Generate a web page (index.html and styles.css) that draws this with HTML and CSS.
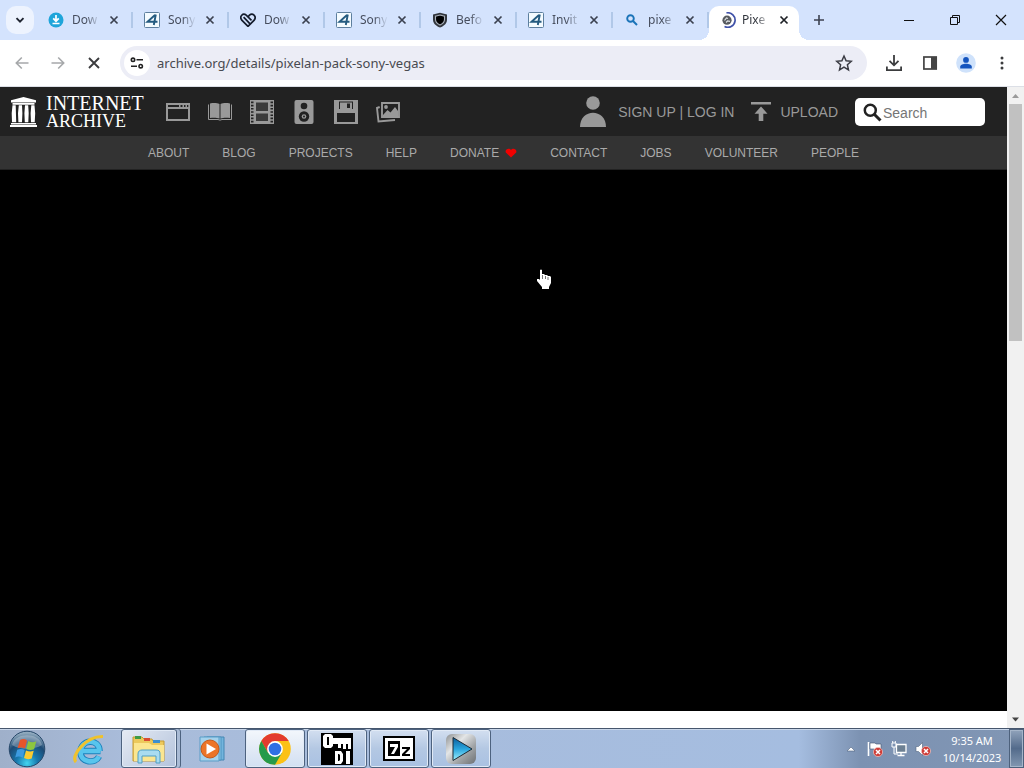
FILE: index.html
```html
<!DOCTYPE html>
<html lang="en">
<head>
<meta charset="utf-8">
<title>Pixelan Pack Sony Vegas</title>
<link rel="stylesheet" href="styles.css">
</head>
<body>
<svg class="defs" width="0" height="0" aria-hidden="true">
  <defs>
    <symbol id="x" viewBox="0 0 16 16"><path d="M4.500 4.500l7 7m0-7l-7 7" stroke="currentColor" stroke-width="1.700" fill="none"/></symbol>
    <symbol id="four" viewBox="0 0 16 16"><rect x=".5" y=".5" width="15" height="15" rx="1" fill="#f4fbff" stroke="#5d7f9e"/><path d="M11 3L3.500 9.700h10M11.800 2.500L9.800 13" fill="none" stroke="#245b80" stroke-width="1.900"/></symbol>
    <symbol id="err" viewBox="0 0 10 10"><circle cx="5" cy="5" r="4.600" fill="#cf3d38" stroke="#f0c4c0" stroke-width=".7"/><path d="M3 3l4 4m0-4L3 7" stroke="#fff" stroke-width="1.500"/></symbol>
  </defs>
</svg>

<header class="tabstrip">
  <button class="tab-search" aria-label="Search tabs"><svg width="16" height="16" viewBox="0 0 16 16"><path d="M4.500 6.200L8 9.700l3.500-3.500" fill="none" stroke="#1f2430" stroke-width="1.900"/></svg></button>
  <nav class="tabs" aria-label="Tabs">
    <div class="tab">
      <svg class="fav" viewBox="0 0 16 16"><circle cx="8" cy="8" r="7.500" fill="#1fa5da"/><path d="M8 3v5.500M5.200 6.300L8 9.200l2.800-2.900M4.500 11.500h7" fill="none" stroke="#fff" stroke-width="1.700"/></svg>
      <a class="title" href="#">Dow</a><button class="close" aria-label="Close tab"><svg><use href="#x"/></svg></button>
    </div>
    <div class="tab"><svg class="fav"><use href="#four"/></svg><a class="title" href="#">Sony</a><button class="close" aria-label="Close tab"><svg><use href="#x"/></svg></button></div>
    <div class="tab">
      <svg class="fav" viewBox="0 0 16 16"><path d="M8 14.300L1.800 8.200C-1 4.500 3 .3 6.200 3.200L11.500 8.300M8 14.300L14.200 8.200C17 4.300 12.500.2 9.500 3.200L8 4.800M3.600 5.200l6.200 6.400M1.800 8.200L8 14.300" fill="none" stroke="#141c2c" stroke-width="1.700"/></svg>
      <a class="title" href="#">Dow</a><button class="close" aria-label="Close tab"><svg><use href="#x"/></svg></button>
    </div>
    <div class="tab"><svg class="fav"><use href="#four"/></svg><a class="title" href="#">Sony</a><button class="close" aria-label="Close tab"><svg><use href="#x"/></svg></button></div>
    <div class="tab">
      <svg class="fav" viewBox="0 0 16 16"><path d="M8 .8L15 2.500v5c0 4-3 6.500-7 8-4-1.500-7-4-7-8v-5z" fill="#33373d"/><path d="M8 3l4.500 1.100v3.500c0 2.700-2 4.400-4.500 5.500-2.500-1.100-4.500-2.800-4.500-5.500V4.100z" fill="#000" stroke="#aab1ba" stroke-width="1.100"/></svg>
      <a class="title" href="#">Befo</a><button class="close" aria-label="Close tab"><svg><use href="#x"/></svg></button>
    </div>
    <div class="tab"><svg class="fav"><use href="#four"/></svg><a class="title" href="#">Invit</a><button class="close" aria-label="Close tab"><svg><use href="#x"/></svg></button></div>
    <div class="tab">
      <svg class="fav" viewBox="0 0 16 16"><circle cx="6.500" cy="6.500" r="3.300" fill="none" stroke="#1a73b8" stroke-width="1.900"/><path d="M9 9l4 4" stroke="#1a73b8" stroke-width="2"/></svg>
      <a class="title" href="#">pixe</a><button class="close" aria-label="Close tab"><svg><use href="#x"/></svg></button>
    </div>
    <div class="tab active">
      <svg class="fav" viewBox="0 0 16 16"><circle cx="7" cy="8.200" r="4.600" fill="#575b60"/><path d="M4.500 8.500l2-2.500 1.500.5M6 10.500l1.500-1.500 2.500.4" stroke="#dfe2e5" stroke-width="1.200" fill="none"/><path d="M6.500.9A7.300 7.300 0 1 1 4.500 14.600" fill="none" stroke="#3f51a8" stroke-width="1.700"/></svg>
      <a class="title" href="#" aria-current="page">Pixe</a><button class="close" aria-label="Close tab"><svg><use href="#x"/></svg></button>
    </div>
  </nav>
  <button class="new-tab" aria-label="New tab"><svg width="16" height="16" viewBox="0 0 16 16"><path d="M8 3v10M3 8h10" stroke="#3c4250" stroke-width="1.600"/></svg></button>
  <div class="window-buttons">
    <button aria-label="Minimize"><svg width="12" height="12" viewBox="0 0 12 12"><path d="M1 6.500h10" stroke="#111"/></svg></button>
    <button aria-label="Restore"><svg width="12" height="12" viewBox="0 0 12 12"><path d="M1.500 3.500h7v7h-7zM3.500 3.500v-2h7v7h-2" fill="none" stroke="#111"/></svg></button>
    <button aria-label="Close"><svg width="12" height="12" viewBox="0 0 12 12"><path d="M1 1l10 10M11 1L1 11" stroke="#111" stroke-width="1.200"/></svg></button>
  </div>
</header>

<div class="toolbar">
  <button class="tool" aria-label="Back"><svg width="20" height="20" viewBox="0 0 20 20"><path d="M16.500 10H4.500M9.800 4.500L4.300 10l5.500 5.500" fill="none" stroke="#a6a8aa" stroke-width="1.600"/></svg></button>
  <button class="tool" aria-label="Forward"><svg width="20" height="20" viewBox="0 0 20 20"><path d="M3.500 10h12M10.200 4.500l5.500 5.500-5.500 5.500" fill="none" stroke="#a6a8aa" stroke-width="1.600"/></svg></button>
  <button class="tool" aria-label="Stop"><svg width="20" height="20" viewBox="0 0 20 20"><path d="M5 5l10 10M15 5L5 15" stroke="#3b3c3e" stroke-width="1.900"/></svg></button>
  <div class="omnibox">
    <button class="site-info" aria-label="Site information"><svg width="14" height="12" viewBox="0 0 14 12"><g fill="none" stroke="#222" stroke-width="1.600"><circle cx="3" cy="2.800" r="1.700"/><path d="M6.500 2.800H13M1 9.200h6"/><circle cx="10.700" cy="9.200" r="1.700"/></g></svg></button>
    <input type="text" aria-label="Address" value="archive.org/details/pixelan-pack-sony-vegas">
    <button class="star" aria-label="Bookmark"><svg width="18" height="18" viewBox="0 0 18 18"><path d="M9 2l2.100 4.800 5.200.5-3.900 3.500 1.100 5.100L9 13.200l-4.500 2.700 1.100-5.100-3.900-3.500 5.200-.5z" fill="none" stroke="#3b3c44" stroke-width="1.500"/></svg></button>
  </div>
  <div class="actions">
    <button class="tool" aria-label="Downloads"><svg width="18" height="18" viewBox="0 0 18 18"><path d="M9 1v10M4.500 6.800L9 11.300l4.500-4.500M1.900 12.500v3.600h14.200v-3.600" fill="none" stroke="#3b3c3e" stroke-width="1.800"/></svg></button>
    <button class="tool" aria-label="Side panel"><svg width="16" height="16" viewBox="0 0 16 16"><rect x="1.900" y="2" width="12.300" height="12" fill="none" stroke="#444" stroke-width="1.700"/><path d="M9 2h5.500v12H9z" fill="#444"/></svg></button>
    <button class="tool" aria-label="Profile"><svg width="20" height="20" viewBox="0 0 20 20"><circle cx="10" cy="10" r="9.800" fill="#cfe2fb"/><circle cx="10" cy="6.900" r="2.900" fill="#1454be"/><path d="M4.200 15.500v-1.800c0-4 11.600-4 11.600 0v1.800z" fill="#1454be"/></svg></button>
    <button class="tool" aria-label="Menu"><svg width="16" height="16" viewBox="0 0 16 16"><g fill="#3b3c3e"><circle cx="8" cy="3" r="1.500"/><circle cx="8" cy="8" r="1.500"/><circle cx="8" cy="13" r="1.500"/></g></svg></button>
  </div>
</div>

<div class="viewport">
  <div class="page">
    <header class="topbar">
      <a class="logo" href="#" aria-label="Internet Archive">
        <svg width="27" height="30" viewBox="0 0 27 30" fill="#fff"><path d="M13.500 0L26 3.200V5.500H1V3.200zM2.500 6h22v1.700h-22zM1 26h25v1.500H1zM0 28h27v2H0z"/><path d="M2.500 8.300h3.200l.5 17H2l-.3-9zM8.800 8.300H12l.4 8-.4 9H8.400l-.4-9zM15 8.300h3.200l.5 8-.4 9h-3.500l-.4-9zM21.300 8.300h3.200l.7 8-.5 9h-3.700l-.4-9z"/></svg>
        <span class="wordmark"><span>INTERNET</span><span class="second">ARCHIVE</span></span>
      </a>
      <nav class="media" aria-label="Media types">
        <a href="#" aria-label="Web"><svg viewBox="0 0 24 24"><path fill-rule="evenodd" d="M0 3h24v18H0zM2 9v10h20V9zM2 5v2h11V5zM14.500 5v2h2V5zM18 5v2h1.500V5zM21 5v2h1.300V5z"/></svg></a>
        <a href="#" aria-label="Texts"><svg viewBox="0 0 24 24"><path d="M2 3.500c3-.7 7-.7 9.500.5v14.500C9 17.500 5 17.500 2 18zM12.500 4C15 2.800 19 2.800 22 3.500V18c-3-.5-7-.5-9.500.5z"/><path d="M.5 4.500v15h9.500q2 1.300 4 0h9.500v-15" fill="none" stroke="#999" stroke-width="1"/></svg></a>
        <a href="#" aria-label="Video"><svg viewBox="0 0 24 24"><path d="M4 0h16v24H4z"/><path d="M6 2.500h12V11H6zM6 13.500h12V21H6z" fill="#3a3a3a"/><path d="M2 0v24M22 0v24" stroke="#999" stroke-width="4" stroke-dasharray="1.600 1.600"/><path d="M.5 0v24M23.500 0v24M4 0v24M20 0v24" stroke="#999"/></svg></a>
        <a href="#" aria-label="Audio"><svg viewBox="0 0 24 24"><rect x="2.500" width="19" height="24" rx="2"/><g fill="#222"><circle cx="12" cy="6" r="3.300"/><circle cx="12" cy="16.500" r="5.200"/></g><circle cx="12" cy="16.500" r="2.300"/><circle cx="12" cy="16.500" r="1" fill="#222"/></svg></a>
        <a href="#" aria-label="Software"><svg viewBox="0 0 24 24"><path d="M0 0h24v24H0z"/><path d="M5 1.500h14V9H5zM3 13h18v9H3z" fill="#222"/><path d="M6 2.500h12V9H6z"/><path d="M13 3.500h3V8h-3z" fill="#222"/></svg></a>
        <a href="#" aria-label="Images"><svg viewBox="0 0 24 24"><g fill="none" stroke="#999" stroke-width="1.900"><path d="M6 3h17v14H6zM3.700 7L1 8l1.500 13.500L19 20"/></g><path d="M7 15l4.500-5 3 2.500L19 7l3 4v6H7z"/><circle cx="10" cy="7" r="1.900"/></svg></a>
      </nav>
      <a class="account" href="#"><svg width="26" height="31" viewBox="0 0 26 31" fill="#999"><circle cx="13" cy="7" r="6.800"/><path d="M0 31c0-19 26-19 26 0z"/></svg>SIGN UP | LOG IN</a>
      <a class="upload" href="#"><svg width="20" height="20" viewBox="0 0 20 20" fill="#999"><path d="M0 0h20v2.400H0zM10 4.500l6.500 7.200h-4.200V19H7.700v-7.300H3.500z"/></svg>UPLOAD</a>
      <form class="search">
        <svg width="19" height="19" viewBox="0 0 19 19"><circle cx="7.300" cy="7.300" r="5.500" fill="none" stroke="#222" stroke-width="2.500"/><path d="M11.500 11.500l6 6" stroke="#222" stroke-width="3"/></svg>
        <input type="search" placeholder="Search" aria-label="Search">
      </form>
    </header>
    <nav class="subnav" aria-label="Site">
      <a href="#">ABOUT</a><a href="#">BLOG</a><a href="#">PROJECTS</a><a href="#">HELP</a>
      <a href="#" class="donate">DONATE<svg width="12" height="10" viewBox="0 0 12 10"><path d="M6 9.500L.8 4.500C-.5 1 4.500-.5 6 2c1.500-2.500 6.500-1 5.200 2.500z" fill="#f00000"/></svg></a>
      <a href="#">CONTACT</a><a href="#">JOBS</a><a href="#">VOLUNTEER</a><a href="#">PEOPLE</a>
    </nav>
    <main class="theatre"></main>
    <div class="below"></div>
  </div>
  <div class="scrollbar" aria-hidden="true">
    <svg width="17" height="17" viewBox="0 0 17 17"><path d="M5 11l3.500-4 3.500 4z" fill="#9a9a9a"/></svg>
    <div class="track"><div class="thumb"></div></div>
    <svg width="17" height="17" viewBox="0 0 17 17"><path d="M5 6.500h7l-3.500 4z" fill="#444"/></svg>
  </div>
</div>

<footer class="taskbar">
  <button class="start" aria-label="Start"><svg width="38" height="38" viewBox="0 0 38 38">
    <defs><radialGradient id="orb" cx=".5" cy=".9" r=".85"><stop offset="0" stop-color="#42d5f0"/><stop offset=".35" stop-color="#1879ae"/><stop offset=".7" stop-color="#1d4a74"/><stop offset="1" stop-color="#8fa9bd"/></radialGradient></defs>
    <circle cx="19" cy="19" r="17.800" fill="url(#orb)" stroke="#27486a"/>
    <path d="M4 15C7 2 31 2 34 15c-8 5-22 5-30 0z" fill="#fff" opacity=".28"/>
    <path d="M12 10q4-2 7 .5l-2 8q-4-2-7.500-.2z" fill="#e6552b"/><path d="M20.300 11q4 2.200 8 .3l-2.200 8q-4 1.700-7.800-.3z" fill="#8dc63f"/><path d="M9.200 19.700q4-1.700 7.500.2l-2 7.800q-3.600-2-7.500-.3z" fill="#3d9be0"/><path d="M18 20.400q4 2 7.700.3l-2 7.700q-4 1.800-7.700-.3z" fill="#fccb30"/></svg></button>
  <div class="apps">
    <button class="app" aria-label="Internet Explorer"><svg width="34" height="34" viewBox="0 0 34 34">
      <path d="M10 19h18.500M27.500 19c0-13-19-12-19 1 0 11 15 12 18.500 4.500" fill="none" stroke="#1c7fba" stroke-width="6.500"/><path d="M10 19h18.500M27.500 19c0-13-19-12-19 1 0 11 15 12 18.500 4.500" fill="none" stroke="#58c5ed" stroke-width="4.700"/>
      <path d="M4 30C-2 24 14 4 31 4.500" fill="none" stroke="#efc22d" stroke-width="3.200"/></svg></button>
    <button class="app open stacked" aria-label="File Explorer"><svg width="34" height="32" viewBox="0 0 34 32">
      <path d="M1 4h9l2 2h8l1 2h11v20H1z" fill="#ecc95c" stroke="#c39a35"/><path d="M3 3h6v3H3z" fill="#3d9b45"/><path d="M12 5h6v3h-6z" fill="#d94b32"/><path d="M21 7h7v3h-7z" fill="#3b8fd0"/><path d="M2 10h15l3 2h12v16H2z" fill="#fbe690"/>
      <path d="M6 30v-9c0-3 2-4 4-4h14c3 0 4 1 4 4v9h-4v-7H10v7z" fill="#a9dcf0" stroke="#4e9fc5"/></svg></button>
    <button class="app" aria-label="Media Player"><svg width="28" height="28" viewBox="0 0 28 28">
      <path d="M8 2h17v23H8z" fill="#73b5dd" stroke="#4486b3"/><path d="M5 2h17v23H5z" fill="#8bc9ea" stroke="#4e93bf"/><path d="M1 2h19v24H1z" fill="#a5d2ec" stroke="#5b9dc7"/><circle cx="11" cy="14" r="9" fill="#ec7427" stroke="#c5591a"/><path d="M7.500 8.500L17 14l-9.500 5.500z" fill="#fff"/></svg></button>
    <button class="app open lit" aria-label="Chrome"><svg width="32" height="32" viewBox="0 0 32 32">
      <circle cx="16" cy="16" r="15.800" fill="#fbc116"/><path d="M2.300 8.100A15.800 15.800 0 0 1 29.700 8.100H16L9.200 20z" fill="#e33b2e"/><path d="M2.300 8.100A15.800 15.800 0 0 0 16 31.800L22.800 20 16 16 9.200 20z" fill="#269a4b"/><circle cx="16" cy="16" r="7.900" fill="#fff"/><circle cx="16" cy="16" r="6.300" fill="#2f6fe4"/></svg></button>
    <button class="app open" aria-label="DI"><svg width="32" height="32" viewBox="0 0 32 32">
      <path d="M0 0h32v32H0z"/><path fill="#fff" fill-rule="evenodd" d="M4 1h6l2 2v2h18v11h-3v-5h-2v5h-3v-5h-2v4h-3v-4h-5v2l-2 2H4l-2-2V3zM6 4v8h2V4zM14 18h6l2 3v7l-2 3h-6zM17 21v7h1l1-1v-5l-1-1zM25 18h4v13h-4z"/></svg></button>
    <button class="app open" aria-label="7-Zip"><svg width="32" height="25" viewBox="0 0 32 25">
      <path d="M0 0h32v25H0z"/><path d="M2 2h28v21H2z" fill="#fff"/><path d="M5 5h12v15H5z"/><path d="M7 8h8v3l-4 7H8l4-7H7z" fill="#fff"/><path d="M19 11h8v2l-5 5h5v2h-8v-2l5-5h-5z"/></svg></button>
    <button class="app open" aria-label="Player"><svg width="32" height="32" viewBox="0 0 32 32">
      <defs><linearGradient id="metal" x1="0" y1="0" x2="1" y2="1"><stop offset="0" stop-color="#8c8f91"/><stop offset=".35" stop-color="#e3e5e6"/><stop offset=".65" stop-color="#a2a5a7"/><stop offset="1" stop-color="#6d7174"/></linearGradient><linearGradient id="tri" x2="0" y2="1"><stop offset="0" stop-color="#0a5d9c"/><stop offset=".5" stop-color="#2aa5dd"/><stop offset="1" stop-color="#9ff1ff"/></linearGradient></defs>
      <rect x="1" y="1" width="30" height="30" rx="6" fill="url(#metal)"/><path d="M8 4.500L27 16 8 27.500z" fill="url(#tri)" stroke="#1c2a35"/></svg></button>
  </div>
  <div class="tray">
    <button aria-label="Show hidden icons"><svg width="16" height="16" viewBox="0 0 16 16"><path d="M4 10l4-4 4 4z" fill="#fff" stroke="#53657f" stroke-width=".6"/></svg></button>
    <button aria-label="Action Center"><svg width="16" height="16" viewBox="0 0 16 16"><path d="M1.500 1v14" stroke="#fff" stroke-width="1.600"/><path d="M3 2h5l1 1h5v6H8L7 8H3z" fill="#fff" stroke="#44566f" stroke-width=".6"/><use href="#err" x="6" y="6" width="10" height="10"/></svg></button>
    <button aria-label="Network"><svg width="16" height="16" viewBox="0 0 16 16"><path d="M5.500 3.500h9.500v8H5.500zM10 12v2M6.500 14.500h7" fill="#6d8093" stroke="#fff" stroke-width="1.300"/><path d="M1 2h4v4H1zM3 6v7h4M1.700 0v2M4.300 0v2" fill="none" stroke="#fff"/></svg></button>
    <button aria-label="Volume"><svg width="16" height="16" viewBox="0 0 16 16"><path d="M1 5.500h2.500l4-4v13l-4-4H1z" fill="#fff" stroke="#53657f" stroke-width=".6"/><use href="#err" x="6" y="5" width="10" height="10"/></svg></button>
    <time class="clock" datetime="2023-10-14T09:35"><span>9:35 AM</span><span>10/14/2023</span></time>
    <button class="peek" aria-label="Show desktop"></button>
  </div>
</footer>

<svg class="pointer" width="16" height="21" viewBox="0 0 16 21" aria-hidden="true"><path d="M4 1q1-1 2 0v4l2 0 1 1 2 0 1 1 2 0 1 1v6l-2 4v2H6v-2L1 12v-2h2l1 1z" fill="#fff"/><path d="M6.500 6v4M9.500 7v3M12 8v3" stroke="#555" stroke-width=".8"/></svg>
</body>
</html>
```

FILE: styles.css
```css
* { box-sizing: border-box; }
body {
  margin: 0;
  height: 100vh;
  display: flex;
  flex-direction: column;
  overflow: hidden;
  background: #fff;
  font-family: "Noto Sans", sans-serif;
}
button { border: 0; padding: 0; background: none; display: flex; align-items: center; justify-content: center; flex: none; }
a { color: inherit; text-decoration: none; }
input { border: 0; padding: 0; background: none; outline: 0; min-width: 0; }
svg { display: block; flex: none; }
.defs { position: absolute; }

/* Tab strip */
.tabstrip { height: 40px; flex: none; display: flex; align-items: center; background: #d4e3fd; padding-left: 6px; }
.tab-search { width: 28px; height: 28px; border-radius: 10px; background: #edf3fe; }
.tabs { display: flex; align-self: stretch; padding: 6px 0 0 3px; }
.tab { width: 96px; height: 28px; display: flex; align-items: center; padding-left: 11px; position: relative; }
.tab:not(.active)::after { content: ""; width: 2px; height: 16px; margin-left: auto; background: #b1c8e8; }
.fav { width: 16px; height: 16px; }
.title {
  width: 28px; margin-left: 8px; white-space: nowrap;
  font-size: 12px; line-height: 20px; color: #474e5e;
  mask-image: linear-gradient(90deg, #000 50%, transparent);
}
.close { width: 16px; height: 16px; margin-left: 6px; color: #3b4150; }
.close svg { width: 16px; height: 16px; }
.tab.active { width: 90px; height: 34px; padding: 0 0 6px 11px; background: #fff; border-radius: 10px 10px 0 0; }
.tab.active::before, .tab.active::after { content: ""; position: absolute; bottom: 0; width: 10px; height: 10px; }
.tab.active::before { right: 100%; background: radial-gradient(circle at 0 0, transparent 10px, #fff 10px); }
.tab.active::after { left: 100%; background: radial-gradient(circle at 100% 0, transparent 10px, #fff 10px); }
.tab.active .title { margin-left: 6px; color: #30343c; }
.tab.active .close { color: #1e2126; }
.new-tab { width: 28px; height: 28px; margin-left: 6px; }
.window-buttons { display: flex; margin-left: auto; }
.window-buttons button { width: 46px; height: 40px; }

/* Toolbar */
.toolbar { height: 47px; flex: none; display: flex; align-items: center; padding: 0 4px; background: #fff; border-bottom: 1px solid #dcdfe6; }
.tool { width: 36px; height: 34px; }
.actions { display: flex; }
.omnibox { flex: 1; height: 34px; margin: 0 9px 0 8px; padding: 0 14px 0 4px; display: flex; align-items: center; border-radius: 17px; background: #ecedf6; }
.site-info { width: 26px; height: 26px; border-radius: 50%; background: #fff; }
.omnibox input { flex: 1; margin-left: 7px; font: 13px/20px "Noto Sans", sans-serif; color: #484a50; }

/* Page */
.viewport { flex: 1; min-height: 0; display: flex; }
.page { flex: 1; min-width: 0; display: flex; flex-direction: column; font-family: "Liberation Sans", Arial, sans-serif; color: #999; }
.topbar { height: 49px; flex: none; display: flex; align-items: center; padding: 0 22px 0 10px; background: #222; font-size: 14px; }
.logo { display: flex; align-items: center; gap: 9px; color: #fff; }
.wordmark { display: flex; flex-direction: column; font-family: "Liberation Serif", serif; font-size: 20px; line-height: 18px; }
.wordmark .second { font-size: 18px; }
.media { display: flex; gap: 18px; margin-left: 22px; }
.media svg { width: 24px; height: 24px; fill: #999; }
.account, .upload { display: flex; align-items: center; white-space: nowrap; }
.account { margin-left: auto; gap: 12px; }
.upload { margin-left: 17px; gap: 9px; }
.search { width: 130px; height: 28px; margin-left: 17px; padding: 2px 8px 0; display: flex; align-items: center; border-radius: 5px; background: #fff; }
.search input { flex: 1; font: 14px/20px "Liberation Sans", Arial, sans-serif; margin-left: 1px; }
.search input::placeholder { color: #757575; }
.subnav { height: 34px; flex: none; display: flex; align-items: center; justify-content: center; gap: 33px; background: #333; border-bottom: 1px solid #222; font-size: 12px; color: #aaa; }
.donate { display: flex; align-items: center; gap: 6px; }
.theatre { flex: 1; background: #000; }
.below { height: 17px; background: #fff; }
.scrollbar { width: 17px; display: flex; flex-direction: column; background: #f1f1f1; }
.track { flex: 1; padding: 0 2px; }
.thumb { height: 39%; background: #c1c1c1; }

/* Taskbar */
.taskbar {
  height: 40px; flex: none; display: flex; align-items: stretch;
  border-top: 1px solid #46566d;
  background: linear-gradient(90deg, #9fb0ca 0, #a9bcda 12%, #a5bde0 78%, #7c92b2 84%, #8196b4 100%);
  box-shadow: inset 0 1px #c9d7ea;
}
.start { width: 54px; }
.apps { display: flex; gap: 2px; margin-left: 5px; }
.app { width: 60px; border-radius: 3px; }
.app.open { border: 1px solid #4d627f; background: linear-gradient(#d3dff0, #b4c8e3 50%, #a9c1e2); box-shadow: inset 0 0 0 1px #e1eaf6; }
.app.stacked { width: 56px; margin-right: 4px; background: linear-gradient(135deg, #e5eaf3, #b3c3dc); box-shadow: inset 0 0 0 1px #e1eaf6, 3px 0 #a9bbd5, 4px 0 #4d627f; }
.app.lit { background: linear-gradient(#f3f7fc, #dfe8f5 60%, #d2e0f2); }
.tray { margin-left: auto; display: flex; align-items: center; color: #fff; }
.tray button { width: 24px; height: 24px; }
.clock { width: 74px; display: flex; flex-direction: column; align-items: center; font-size: 11px; line-height: 17px; }
.tray .peek { width: 15px; height: 39px; border: 1px solid #4d617c; background: linear-gradient(#91a3bb, #536b8b 50%, #8297b1); box-shadow: inset 0 0 0 1px #a5b5c9; }

/* Mouse pointer over the page */
.pointer { position: absolute; left: 536px; top: 269px; }
```
